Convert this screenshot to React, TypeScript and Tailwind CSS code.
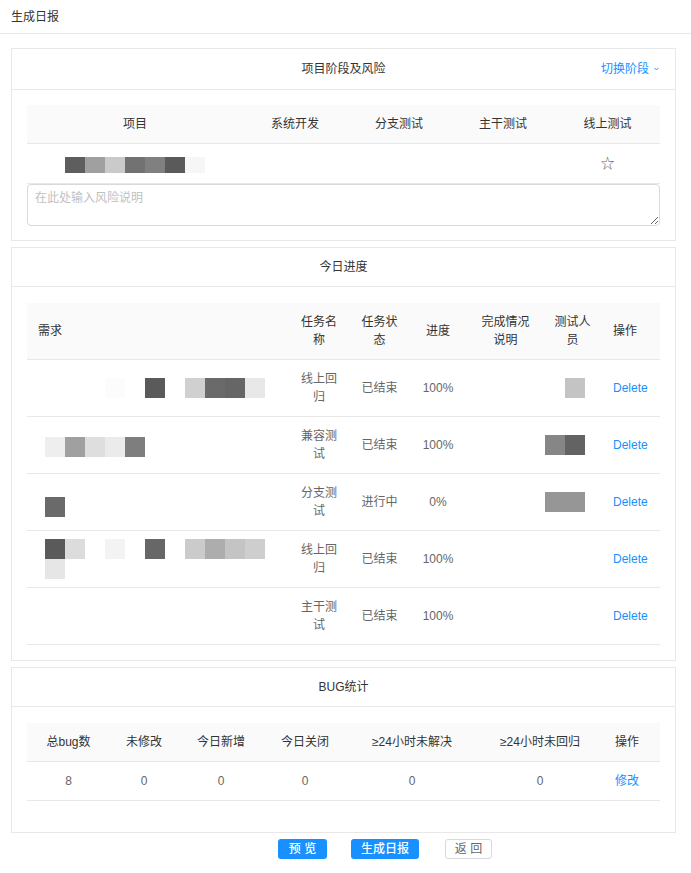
import React from "react";

const T = "bg-transparent";

const projBlocks = [
  "bg-[#5e5e5e]",
  "bg-[#a0a0a0]",
  "bg-[#cacaca]",
  "bg-[#727272]",
  "bg-[#808080]",
  "bg-[#5a5a5a]",
  "bg-[#f6f6f6]",
];

type Row = {
  req: string[][];
  reqOffset: string;
  name: string;
  status: string;
  progress: string;
  tester: string[];
};

const rows: Row[] = [
  {
    req: [[T, T, T, "bg-[#fcfcfc]", T, "bg-[#5a5a5a]", T, "bg-[#d0d0d0]", "bg-[#6a6a6a]", "bg-[#666666]", "bg-[#e8e8e8]"]],
    reqOffset: "",
    name: "线上回归",
    status: "已结束",
    progress: "100%",
    tester: [T, "bg-[#c4c4c4]"],
  },
  {
    req: [["bg-[#eeeeee]", "bg-[#a0a0a0]", "bg-[#dedede]", "bg-[#ebebeb]", "bg-[#7e7e7e]"]],
    reqOffset: "mt-[3px]",
    name: "兼容测试",
    status: "已结束",
    progress: "100%",
    tester: ["bg-[#868686]", "bg-[#636363]"],
  },
  {
    req: [["bg-[#6a6a6a]"]],
    reqOffset: "mt-[10px]",
    name: "分支测试",
    status: "进行中",
    progress: "0%",
    tester: ["bg-[#969696]", "bg-[#969696]"],
  },
  {
    req: [
      ["bg-[#5a5a5a]", "bg-[#dcdcdc]", T, "bg-[#f3f3f3]", T, "bg-[#676767]", T, "bg-[#cbcbcb]", "bg-[#adadad]", "bg-[#c4c4c4]", "bg-[#cecece]"],
      ["bg-[#e6e6e6]"],
    ],
    reqOffset: "-my-[2px]",
    name: "线上回归",
    status: "已结束",
    progress: "100%",
    tester: [],
  },
  {
    req: [],
    reqOffset: "",
    name: "主干测试",
    status: "已结束",
    progress: "100%",
    tester: [],
  },
];

function Card({
  title,
  extra,
  children,
  bodyClass,
  headClass,
}: {
  title: string;
  extra?: React.ReactNode;
  children: React.ReactNode;
  bodyClass: string;
  headClass: string;
}) {
  return (
    <div className="border border-[#e8e8e8] bg-white">
      <div className={"relative border-b border-[#e8e8e8] flex items-center justify-center " + headClass}>
        <span className="text-[12px] leading-[18px] text-[#333]">{title}</span>
        {extra}
      </div>
      <div className={bodyClass}>{children}</div>
    </div>
  );
}

const th = "bg-[#fafafa] border-b border-[#e8e8e8] py-[10px] text-[12px] leading-[18px] text-[#333] font-normal text-center";
const td = "border-b border-[#e8e8e8] py-[10px] text-[12px] leading-[18px] text-[#666] text-center";

export default function App() {
  return (
    <div className="w-[691px] min-h-[873px] bg-white" style={{ fontFamily: '"Liberation Sans", "Noto Sans CJK SC", sans-serif' }}>
      <div className="h-[34px] border-b border-[#e8e8e8] px-[11px] pt-[4px]">
        <span className="text-[12px] leading-[18px] text-[#333]">生成日报</span>
      </div>

      <div className="pl-[11px] pr-[15px] pt-[14px] flex flex-col gap-[6px]">
        <Card
          title="项目阶段及风险"
          headClass="h-[41px]"
          bodyClass="px-[15px] pt-[15px] pb-[14px]"
          extra={
            <div className="absolute right-[16px] top-0 h-full flex items-center gap-[5px] text-[#1890ff] text-[12px]">
              <span>切换阶段</span>
              <svg width="5" height="4" viewBox="0 0 5 4" fill="none">
                <polyline points="0.4,0.8 2.5,3 4.6,0.8" stroke="#1890ff" strokeWidth="0.9" />
              </svg>
            </div>
          }
        >
          <table className="w-full table-fixed border-collapse">
            <colgroup>
              <col className="w-[216px]" />
              <col className="w-[104px]" />
              <col className="w-[104px]" />
              <col className="w-[104px]" />
              <col className="w-[105px]" />
            </colgroup>
            <thead>
              <tr>
                <th className={th}>项目</th>
                <th className={th}>系统开发</th>
                <th className={th}>分支测试</th>
                <th className={th}>主干测试</th>
                <th className={th}>线上测试</th>
              </tr>
            </thead>
            <tbody>
              <tr>
                <td className={td + " !text-left pl-[38px]"}>
                  <div className="flex h-[18px] items-center">
                    {projBlocks.map((c, i) => (
                      <div key={i} className={"w-[20px] h-[16px] mt-[3px] " + c} />
                    ))}
                  </div>
                </td>
                <td className={td}></td>
                <td className={td}></td>
                <td className={td}></td>
                <td className={td}>
                  <span className="text-[14px] leading-[18px] text-[#666]">☆</span>
                </td>
              </tr>
            </tbody>
          </table>
          <textarea
            className="block w-full h-[42px] border border-[#d9d9d9] rounded-[4px] px-[7px] pt-[4px] text-[12px] leading-[18px] text-[#666] placeholder:text-[#bfbfbf] outline-none"
            placeholder="在此处输入风险说明"
          />
        </Card>

        <Card title="今日进度" headClass="h-[39px]" bodyClass="px-[15px] pt-[16px] pb-[15px]">
          <table className="w-full table-fixed border-collapse">
            <colgroup>
              <col className="w-[262px]" />
              <col className="w-[60px]" />
              <col className="w-[61px]" />
              <col className="w-[56px]" />
              <col className="w-[79px]" />
              <col className="w-[55px]" />
              <col className="w-[60px]" />
            </colgroup>
            <thead>
              <tr>
                <th className={th + " !text-left pl-[11px]"}>需求</th>
                <th className={th + " px-[10px]"}>任务名称</th>
                <th className={th + " px-[10px]"}>任务状态</th>
                <th className={th + " px-[10px]"}>进度</th>
                <th className={th + " px-[10px]"}>完成情况说明</th>
                <th className={th + " px-[9px]"}>测试人员</th>
                <th className={th + " !text-left pl-[13px]"}>操作</th>
              </tr>
            </thead>
            <tbody>
              {rows.map((r, i) => (
                <tr key={i}>
                  <td className={td + " pl-[18px] align-middle"}>
                    <div className={"flex flex-col " + r.reqOffset}>
                      {r.req.map((line, j) => (
                        <div key={j} className="flex">
                          {line.map((c, k) => (
                            <div key={k} className={"w-[20px] h-[20px] " + c} />
                          ))}
                        </div>
                      ))}
                    </div>
                  </td>
                  <td className={td + " px-[10px]"}>{r.name}</td>
                  <td className={td + " px-[10px]"}>{r.status}</td>
                  <td className={td + " px-[10px]"}>{r.progress}</td>
                  <td className={td + " px-[10px]"}></td>
                  <td className={td + " px-0"}>
                    <div className="flex">
                      {r.tester.map((c, k) => (
                        <div key={k} className={"w-[20px] h-[20px] " + c} />
                      ))}
                    </div>
                  </td>
                  <td className={td + " !text-left pl-[13px] !text-[#1890ff]"}>Delete</td>
                </tr>
              ))}
            </tbody>
          </table>
        </Card>

        <Card title="BUG统计" headClass="h-[39px]" bodyClass="px-[15px] pt-[16px] pb-[31px]">
          <table className="w-full table-fixed border-collapse">
            <colgroup>
              <col className="w-[83px]" />
              <col className="w-[68px]" />
              <col className="w-[86px]" />
              <col className="w-[82px]" />
              <col className="w-[132px]" />
              <col className="w-[124px]" />
              <col className="w-[58px]" />
            </colgroup>
            <thead>
              <tr>
                <th className={th}>总bug数</th>
                <th className={th}>未修改</th>
                <th className={th}>今日新增</th>
                <th className={th}>今日关闭</th>
                <th className={th}>≥24小时未解决</th>
                <th className={th}>≥24小时未回归</th>
                <th className={th + " !text-left pl-[13px]"}>操作</th>
              </tr>
            </thead>
            <tbody>
              <tr>
                <td className={td}>8</td>
                <td className={td}>0</td>
                <td className={td}>0</td>
                <td className={td}>0</td>
                <td className={td}>0</td>
                <td className={td}>0</td>
                <td className={td + " !text-left pl-[13px] !text-[#1890ff]"}>修改</td>
              </tr>
            </tbody>
          </table>
        </Card>

        <div className="flex items-center pl-[267px] gap-[24px]">
          <button className="w-[49px] h-[20px] rounded-[3px] bg-[#1890ff] text-white text-[12px] leading-[20px] font-medium">预 览</button>
          <button className="w-[68px] h-[20px] rounded-[3px] bg-[#1890ff] text-white text-[12px] leading-[20px] font-medium">生成日报</button>
          <button className="w-[47px] h-[20px] rounded-[3px] bg-white border border-[#d9d9d9] text-[#666] text-[12px] leading-[18px] ml-[2px]">返 回</button>
        </div>
      </div>
    </div>
  );
}
